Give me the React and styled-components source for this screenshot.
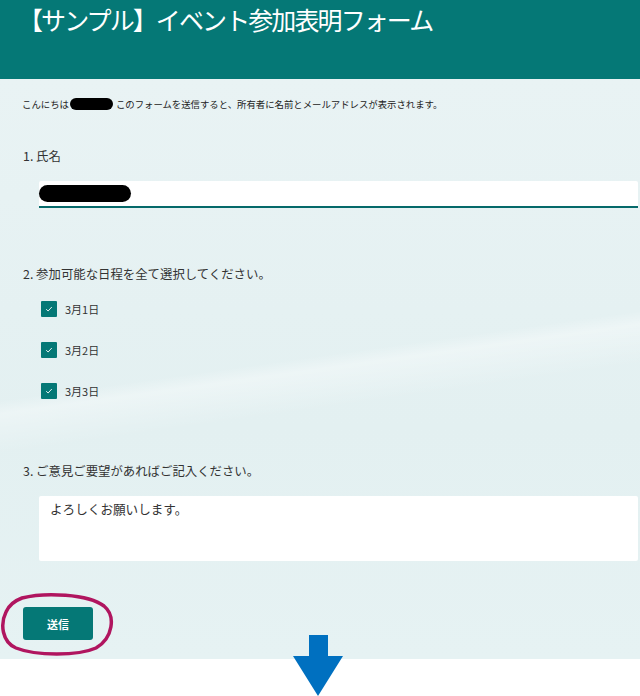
import React from 'react';
import styled, { createGlobalStyle } from 'styled-components';

const GlobalStyle = createGlobalStyle`
  body {
    margin: 0;
    font-family: "Noto Sans CJK JP", "Noto Sans", sans-serif;
    color: #333;
  }
`;

const Page = styled.div`
  position: relative;
  width: 640px;
  height: 696px;
  overflow: hidden;
  background: #fff;
`;

const Header = styled.header`
  height: 79px;
  box-sizing: border-box;
  background: #057876;
  padding: 0 0 0 18px;
`;

const Title = styled.h1`
  margin: 0;
  font-size: 25px;
  font-weight: 400;
  color: #fff;
  letter-spacing: -1.9px;
  line-height: 38px;
`;

const Body = styled.main`
  height: 580px;
  box-sizing: border-box;
  padding: 18px 2px 0 22px;
  background:
    linear-gradient(172deg, transparent 48%, rgba(255, 255, 255, 0.35) 50%, transparent 56%),
    linear-gradient(180deg, #e9f3f4 0%, #e3f0f1 60%, #e6f2f3 100%);
`;

const Intro = styled.p`
  margin: 0;
  font-size: 9.4px;
  line-height: 14px;
  color: #222;
  display: flex;
  align-items: center;
`;

const Blob = styled.span`
  display: inline-block;
  width: ${(p) => p.$w}px;
  height: ${(p) => p.$h}px;
  border-radius: ${(p) => p.$h / 2}px;
  background: #000;
  margin: 0 ${(p) => p.$gap || 0}px 0 ${(p) => p.$lead || 0}px;
`;

const Question = styled.section`
  margin-top: ${(p) => p.$top}px;
`;

const Label = styled.div`
  font-size: 12.4px;
  line-height: 16px;
  color: #333;
  padding-left: 1px;
`;

const Input = styled.div`
  margin: 17px 0 0 17px;
  height: 25px;
  background: #fff;
  border-bottom: 2px solid #05696a;
  border-radius: 2px 2px 0 0;
  display: flex;
  align-items: center;
`;

const Choices = styled.div`
  display: flex;
  flex-direction: column;
  gap: 25px;
  margin: 19px 0 0 19px;
`;

const Choice = styled.label`
  display: flex;
  align-items: center;
  gap: 8px;
  font-size: 11px;
  line-height: 16px;
  color: #333;
`;

const Box = styled.span`
  width: 16px;
  height: 16px;
  border-radius: 1px;
  background: #057876;
  display: flex;
  align-items: center;
  justify-content: center;
`;

const TextArea = styled.div`
  margin: 17px 0 0 17px;
  height: 65px;
  box-sizing: border-box;
  padding: 4px 11px;
  background: #fff;
  border-radius: 2px;
  font-size: 12.6px;
  line-height: 18px;
  color: #333;
`;

const SubmitButton = styled.button`
  margin: 46px 0 0 1px;
  width: 70px;
  height: 33px;
  border: none;
  border-radius: 3px;
  background: #057876;
  color: #fff;
  font-family: inherit;
  font-size: 11px;
  font-weight: 700;
  cursor: pointer;
`;

const Circle = styled.svg`
  position: absolute;
  left: 0;
  top: 592px;
`;

const Arrow = styled.svg`
  position: absolute;
  left: 293px;
  top: 635px;
`;

const Check = () => (
  <svg width="8" height="8" viewBox="0 0 8 8">
    <path d="M1.2 4.2 L3.1 6 L6.8 2" fill="none" stroke="#fff" strokeWidth="0.9" />
  </svg>
);

export default function App() {
  return (
    <Page>
      <GlobalStyle />
      <Header>
        <Title>【サンプル】イベント参加表明フォーム</Title>
      </Header>
      <Body>
        <Intro>
          こんにちは
          <Blob $w={43} $h={12} $lead={1} $gap={3} />
          このフォームを送信すると、所有者に名前とメールアドレスが表示されます。
        </Intro>

        <Question $top={37}>
          <Label>1. 氏名</Label>
          <Input>
            <Blob $w={92} $h={17} />
          </Input>
        </Question>

        <Question $top={58}>
          <Label>2. 参加可能な日程を全て選択してください。</Label>
          <Choices>
            {['3月1日', '3月2日', '3月3日'].map((d) => (
              <Choice key={d}>
                <Box>
                  <Check />
                </Box>
                {d}
              </Choice>
            ))}
          </Choices>
        </Question>

        <Question $top={64}>
          <Label>3. ご意見ご要望があればご記入ください。</Label>
          <TextArea>よろしくお願いします。</TextArea>
        </Question>

        <SubmitButton>送信</SubmitButton>
      </Body>

      <Circle width="118" height="66" viewBox="0 0 118 66">
        <path
          d="M22 6 C45 0 88 2 104 14 C116 24 113 46 96 56 C78 64 36 64 16 56 C2 50 0 32 6 20 C9 13 14 9 22 6 Z"
          fill="none"
          stroke="#b0155f"
          strokeWidth="3.5"
        />
      </Circle>

      <Arrow width="50" height="61" viewBox="0 0 50 61">
        <path d="M16 0 H35 V21 H50 L25 61 L0 21 H16 Z" fill="#0070c0" />
      </Arrow>
    </Page>
  );
}
